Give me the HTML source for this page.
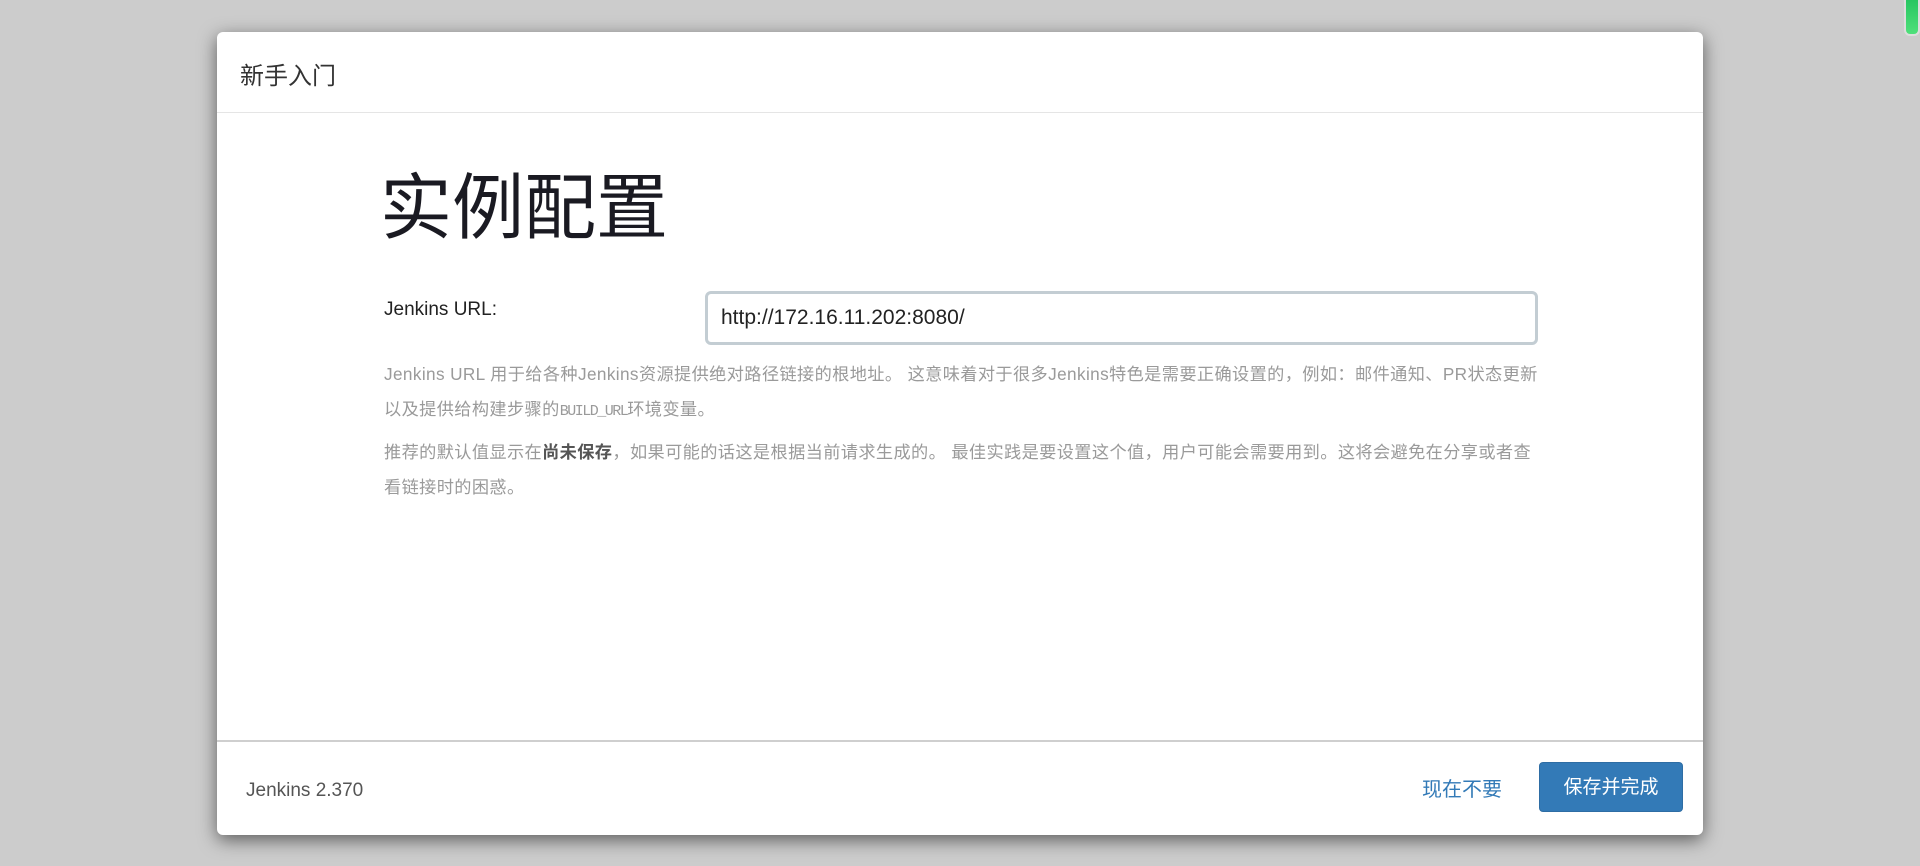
<!DOCTYPE html>
<html><head><meta charset="utf-8">
<style>
html,body{margin:0;padding:0;width:1920px;height:866px;overflow:hidden;background:#cccccc;font-family:"Liberation Sans","Noto Sans CJK SC",sans-serif;}
.modal{position:absolute;left:217px;top:32px;width:1486px;height:803px;background:#fff;border-radius:6px;box-shadow:0 5px 18px rgba(0,0,0,.55);}
.hdr{height:80px;border-bottom:1px solid #e5e5e5;}
.hdr span{position:absolute;left:23px;top:31px;font-size:24px;color:#333;line-height:28px;}
h1{position:absolute;left:163px;top:132px;margin:0;font-size:72px;font-weight:normal;color:#1a1a22;line-height:90px;}
.lbl{position:absolute;left:167px;top:267px;font-size:19px;color:#222;}
.inp{position:absolute;left:488px;top:259px;width:814px;height:48px;border:3px solid #c3cdd3;border-radius:6px;font-size:21px;color:#222;line-height:48px;padding-left:13px;box-sizing:content-box;}
.help{position:absolute;left:167px;top:325px;width:1180px;font-size:17.2px;color:#9a9a9a;line-height:35px;white-space:nowrap;letter-spacing:0.38px;}
.help p{margin:0 0 6px 0;}
.help b{color:#555;}
.mono{font-family:"Liberation Mono","Noto Sans CJK SC",monospace;font-size:15px;letter-spacing:-1.5px;}
.ftr{position:absolute;left:0;top:708px;width:1486px;height:95px;border-top:2px solid #cfcfcf;}
.ver{position:absolute;left:29px;top:38px;font-size:19px;color:#555;}
.skip{position:absolute;left:1205px;top:31px;font-size:20px;color:#337ab7;}
.btn{position:absolute;left:1322px;top:20px;width:144px;height:50px;background:#337ab7;border-radius:4px;color:#fff;font-size:19px;line-height:50px;text-align:center;border:1px solid #2e6da4;box-sizing:border-box;}
.grn{position:absolute;left:1904px;top:-6px;width:12px;height:38px;border-radius:6px;background:linear-gradient(#22c35e,#4fe07a);border:2px solid #ddd;}
</style></head><body>
<div class="grn"></div>
<div class="modal">
<div class="hdr"><span>新手入门</span></div>
<h1>实例配置</h1>
<div class="lbl">Jenkins URL:</div>
<div class="inp">http://172.16.11.202:8080/</div>
<div class="help">
<p>Jenkins URL 用于给各种Jenkins资源提供绝对路径链接的根地址。 这意味着对于很多Jenkins特色是需要正确设置的，例如：邮件通知、PR状态更新<br>以及提供给构建步骤的<span class="mono">BUILD_URL</span>环境变量。</p>
<p>推荐的默认值显示在<b>尚未保存</b>，如果可能的话这是根据当前请求生成的。 最佳实践是要设置这个值，用户可能会需要用到。这将会避免在分享或者查<br>看链接时的困惑。</p>
</div>
<div class="ftr">
<div class="ver">Jenkins 2.370</div>
<div class="skip">现在不要</div>
<div class="btn">保存并完成</div>
</div>
</div>
</body></html>
